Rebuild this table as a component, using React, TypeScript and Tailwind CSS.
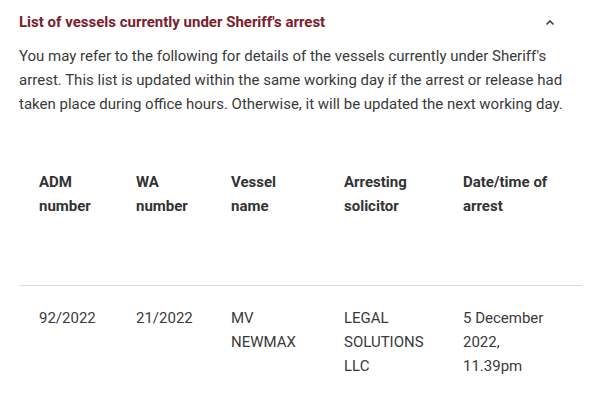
import React from "react";

const rows = [
  {
    adm: "92/2022",
    wa: "21/2022",
    vessel: ["MV", "NEWMAX"],
    solicitor: ["LEGAL", "SOLUTIONS", "LLC"],
    date: ["5 December", "2022,", "11.39pm"],
  },
];

const ChevronUp = () => (
  <svg width="10" height="7" viewBox="0 0 10 7" fill="none">
    <path d="M1.5 5.5 L5 2 L8.5 5.5" stroke="#444" strokeWidth="1.6" />
  </svg>
);

export default function App() {
  return (
    <div
      className="w-[600px] h-[415px] bg-white overflow-hidden text-[#3a3a3a]"
      style={{ fontFamily: "Roboto, 'Liberation Sans', sans-serif" }}
    >
      <div className="px-[19px] pt-[12px]">
        <div className="flex items-center justify-between h-[20px]">
          <h2 className="text-[15px] font-bold text-[#7b1d2d] leading-5">
            List of vessels currently under Sheriff's arrest
          </h2>
          <div className="pr-[26px]">
            <ChevronUp />
          </div>
        </div>
        <p className="mt-[12px] text-[15px] leading-6">
          You may refer to the following for details of the vessels currently under Sheriff's
          arrest. This list is updated within the same working day if the arrest or release had
          taken place during office hours. Otherwise, it will be updated the next working day.
        </p>
        <table className="mt-[54px] w-[563px] table-fixed border-collapse text-[15px] leading-6 text-left">
          <thead>
            <tr className="border-b border-[#dcdcdc] align-top">
              <th className="w-[97px] px-5 pb-[67px] font-bold text-[#333]">ADM number</th>
              <th className="w-[95px] px-5 pb-[67px] font-bold text-[#333]">WA number</th>
              <th className="w-[113px] px-5 pb-[67px] font-bold text-[#333]">Vessel name</th>
              <th className="w-[119px] px-5 pb-[67px] font-bold text-[#333]">Arresting solicitor</th>
              <th className="w-[139px] px-5 pb-[67px] font-bold text-[#333]">
                Date/time of
                <br />
                arrest
              </th>
            </tr>
          </thead>
          <tbody>
            {rows.map((r) => (
              <tr key={r.adm} className="align-top">
                <td className="px-5 pt-5">{r.adm}</td>
                <td className="px-5 pt-5">{r.wa}</td>
                <td className="px-5 pt-5">
                  {r.vessel.map((l) => (
                    <div key={l}>{l}</div>
                  ))}
                </td>
                <td className="px-5 pt-5">
                  {r.solicitor.map((l) => (
                    <div key={l}>{l}</div>
                  ))}
                </td>
                <td className="px-5 pt-5">
                  {r.date.map((l) => (
                    <div key={l}>{l}</div>
                  ))}
                </td>
              </tr>
            ))}
          </tbody>
        </table>
      </div>
    </div>
  );
}
